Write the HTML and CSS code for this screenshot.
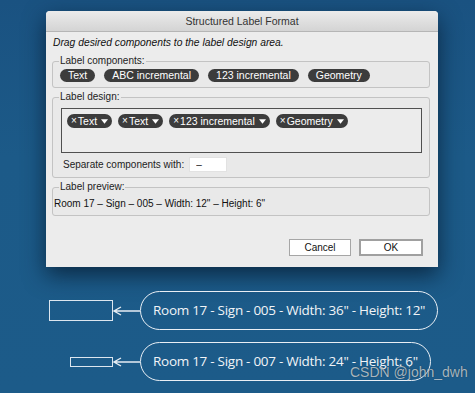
FILE: index.html
```html
<!DOCTYPE html>
<html lang="en">
<head>
    <meta charset="UTF-8">
    <meta name="viewport" content="width=device-width, initial-scale=1.0">
    <title>Structured Label Format</title>
    <link rel="stylesheet" href="styles.css">
</head>
<body>
    <div class="dialog">
        <div class="title-bar">Structured Label Format</div>
        <div class="dialog-body">
            <p class="intro">Drag desired components to the label design area.</p>

            <fieldset class="group">
                <legend>Label components:</legend>
                <div class="chips">
                    <span class="chip">Text</span>
                    <span class="chip">ABC incremental</span>
                    <span class="chip">123 incremental</span>
                    <span class="chip">Geometry</span>
                </div>
            </fieldset>

            <fieldset class="group">
                <legend>Label design:</legend>
                <div class="drop-area">
                    <span class="token"><span class="x">&times;</span>Text<svg class="caret" viewBox="0 0 8 5"><path d="M0 0h8L4 5z"/></svg></span>
                    <span class="token"><span class="x">&times;</span>Text<svg class="caret" viewBox="0 0 8 5"><path d="M0 0h8L4 5z"/></svg></span>
                    <span class="token"><span class="x">&times;</span>123 incremental<svg class="caret" viewBox="0 0 8 5"><path d="M0 0h8L4 5z"/></svg></span>
                    <span class="token"><span class="x">&times;</span>Geometry<svg class="caret" viewBox="0 0 8 5"><path d="M0 0h8L4 5z"/></svg></span>
                </div>
                <div class="separator-row">
                    <label for="sep">Separate components with:</label>
                    <input type="text" id="sep" value="–">
                </div>
            </fieldset>

            <fieldset class="group">
                <legend>Label preview:</legend>
                <div class="preview">Room 17 – Sign – 005 – Width: 12" – Height: 6"</div>
            </fieldset>

            <div class="buttons">
                <button class="btn">Cancel</button>
                <button class="btn btn-default">OK</button>
            </div>
        </div>
    </div>

    <div class="examples">
        <div class="example-row">
            <div class="sign-cell"><span class="sign sign-large"></span></div>
            <svg class="arrow" viewBox="0 0 27 12"><path d="M27 6H1M8 2L1 6l7 4"/></svg>
            <div class="label-pill">Room 17 - Sign - 005 - Width: 36" - Height: 12"</div>
        </div>
        <div class="example-row">
            <div class="sign-cell"><span class="sign sign-small"></span></div>
            <svg class="arrow" viewBox="0 0 27 12"><path d="M27 6H1M8 2L1 6l7 4"/></svg>
            <div class="label-pill">Room 17 - Sign - 007 - Width: 24" - Height: 6"</div>
        </div>
    </div>

    <div class="watermark">CSDN @john_dwh</div>
</body>
</html>
```

FILE: styles.css
```css
body {
    margin: 0;
    height: 393px;
    overflow: hidden;
    position: relative;
    background: linear-gradient(#1a5281, #1c5a88 40%, #1c5b89);
    font-family: 'Liberation Sans', Arial, sans-serif;
}
.dialog {
    margin: 11px 0 0 46px;
    width: 392px;
    height: 256px;
    background-color: #ececec;
    border-radius: 4px 4px 0 0;
    box-shadow: 0 8px 22px rgba(5, 25, 45, 0.75);
}
.title-bar {
    height: 20px;
    line-height: 20px;
    text-align: center;
    font-size: 10.5px;
    color: #333;
    background: linear-gradient(#ebebeb, #d4d4d4);
    border-bottom: 1px solid #b5b5b5;
    border-radius: 4px 4px 0 0;
}
.dialog-body {
    padding: 0 8px 0 6px;
}
.intro {
    margin: 5px 0 0 1px;
    font-size: 10.3px;
    line-height: 12px;
    font-style: italic;
    color: #111;
}
.group {
    margin: 6px 0 0;
    padding: 2px 7px 5px 7px;
    border: 1px solid #c3c3c3;
    border-radius: 3px;
    background-color: #e9e9e9;
}
.group + .group {
    margin-top: 3px;
}
.group legend {
    padding: 0 1px;
    margin-left: -1px;
    font-size: 10px;
    line-height: 12px;
    color: #222;
}
.chips {
    display: flex;
    gap: 9px;
}
.chip {
    height: 13px;
    line-height: 13px;
    padding: 0 8px;
    border-radius: 7px;
    background-color: #3c3c3c;
    color: #fff;
    font-size: 10.5px;
}
.drop-area {
    height: 43px;
    margin: 3px 0 0 1px;
    padding: 0 5px;
    border: 1px solid #505050;
    background-color: #ececec;
    display: flex;
    align-items: flex-start;
    gap: 6px;
}
.token {
    margin-top: 5px;
    height: 14px;
    padding: 0 4px;
    border-radius: 7px;
    background-color: #3c3c3c;
    color: #fff;
    font-size: 10.5px;
    line-height: 14px;
    display: flex;
    align-items: center;
}
.token .x {
    margin-right: 1px;
    font-size: 10px;
}
.caret {
    width: 7px;
    height: 5px;
    margin-left: 4px;
    fill: #fff;
}
.separator-row {
    margin: 4px 0 0 3px;
    display: flex;
    align-items: center;
    gap: 5px;
    font-size: 10px;
    color: #222;
}
.separator-row input {
    width: 30px;
    height: 13px;
    padding: 0 0 0 6px;
    border: 1px solid #e2e2e2;
    background-color: #fff;
    font-family: inherit;
    font-size: 10px;
    color: #222;
}
.preview {
    margin: 3px 0 0 -6px;
    font-size: 10px;
    line-height: 12px;
    color: #111;
}
.buttons {
    margin: 23px 7px 0 0;
    display: flex;
    justify-content: flex-end;
    gap: 8px;
}
.btn {
    width: 62px;
    height: 17px;
    padding: 0;
    border: 1px solid #a6a6a6;
    background-color: #fff;
    font-family: inherit;
    font-size: 10px;
    color: #111;
}
.btn-default {
    width: 64px;
    border: 2px solid #a0a0a0;
}
.examples {
    margin-top: 24px;
    display: flex;
    flex-direction: column;
    gap: 12px;
}
.example-row {
    display: flex;
    align-items: center;
}
.sign-cell {
    width: 113px;
    display: flex;
    justify-content: flex-end;
}
.sign {
    border: 1.5px solid #dce6ef;
}
.sign-large {
    width: 62px;
    height: 19px;
}
.sign-small {
    width: 41px;
    height: 8px;
}
.arrow {
    width: 27px;
    height: 12px;
    fill: none;
    stroke: #e6edf3;
    stroke-width: 1.4;
}
.label-pill {
    height: 37px;
    line-height: 37px;
    padding: 0 12px 0 12px;
    border: 1.5px solid #e9eff5;
    border-radius: 20px;
    color: #f1f4f7;
    font-family: 'Open Sans', sans-serif;
    font-size: 13.5px;
    letter-spacing: -0.28px;
}
.watermark {
    position: absolute;
    left: 350px;
    top: 364px;
    font-size: 14px;
    color: rgba(220, 225, 230, 0.75);
    text-shadow: 0 0 1px rgba(0, 0, 0, 0.5);
}
```
